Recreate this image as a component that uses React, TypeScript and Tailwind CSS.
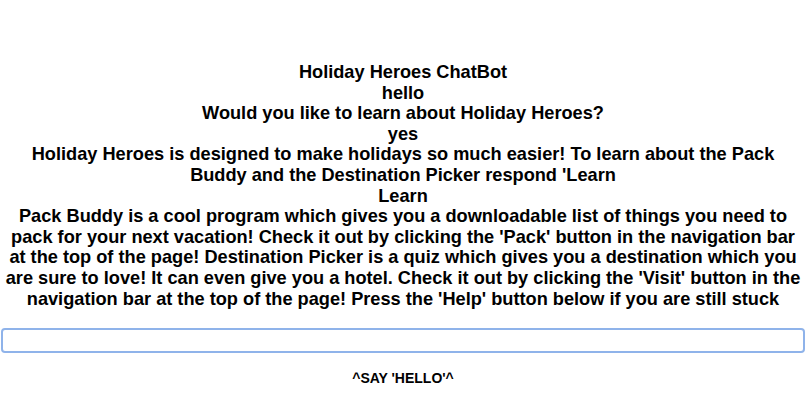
export default function App() {
  const lines = [
    "Holiday Heroes ChatBot",
    "hello",
    "Would you like to learn about Holiday Heroes?",
    "yes",
    "Holiday Heroes is designed to make holidays so much easier! To learn about the Pack Buddy and the Destination Picker respond 'Learn",
    "Learn",
    "Pack Buddy is a cool program which gives you a downloadable list of things you need to pack for your next vacation! Check it out by clicking the 'Pack' button in the navigation bar at the top of the page! Destination Picker is a quiz which gives you a destination which you are sure to love! It can even give you a hotel. Check it out by clicking the 'Visit' button in the navigation bar at the top of the page! Press the 'Help' button below if you are still stuck",
  ]

  return (
    <div className="min-h-[410px] bg-white text-black font-['Liberation_Sans',Arial,sans-serif] pt-[62px]">
      <div className="text-center text-[18.2px] font-bold leading-[20.6px] px-1">
        {lines.map((l, i) => (
          <p key={i}>{l}</p>
        ))}
      </div>
      <div className="mt-[19px] px-[1px]">
        <input
          type="text"
          className="block w-full h-[25px] border-2 border-[#8fb3ea] rounded-[4px] outline-none px-1 text-[13px]"
        />
      </div>
      <p className="text-center text-[14px] font-bold mt-[15px]">^SAY 'HELLO'^</p>
    </div>
  )
}
